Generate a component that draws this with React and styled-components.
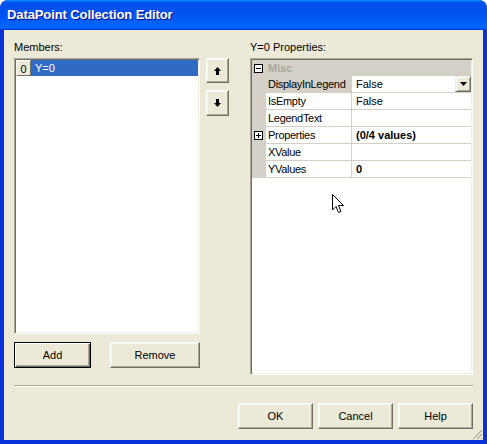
import React from 'react'
import styled, { createGlobalStyle } from 'styled-components'

const GlobalStyle = createGlobalStyle`
    body { margin: 0; background: #fff; }
    * { box-sizing: border-box; }
`;

const WINDOW = styled.div`
    position: relative;
    width: 487px;
    height: 444px;
    display: flex;
    flex-direction: column;
    background: #0831d9;
    border-radius: 8px 8px 0 0;
    font-family: "Liberation Sans", Arial, sans-serif;
    font-size: 11px;
    color: #000;
    overflow: hidden;
`;

const TITLE_BAR = styled.div`
    height: 30px;
    flex: none;
    display: flex;
    align-items: center;
    padding: 0 0 1px 7px;
    background: linear-gradient(180deg, #0997ff, #0053ee 8%, #0050ee 40%, #0066ff 88%, #0066ff 93%, #005bff 95%, #003dd7 96%, #003dd7);
    border-radius: 8px 8px 0 0;
    color: #fff;
    font-weight: bold;
    font-size: 13px;
    text-shadow: 1px 1px #0f1089;
    letter-spacing: -0.1px;
`;

const CLIENT = styled.div`
    position: relative;
    flex: 1;
    margin: 0 4px 4px;
    padding: 10px 10px 0;
    background: #ece9d8;
    display: flex;
    flex-direction: column;
`;

const TOP = styled.div`
    display: flex;
    align-items: flex-start;
`;

const COLUMN = styled.div`
    width: ${props => props.w}px;
    margin-left: ${props => props.ml || 0}px;
    display: flex;
    flex-direction: column;
`;

const LABEL = styled.div`
    height: 14px;
    line-height: 14px;
    margin-bottom: 4px;
`;

const SUNKEN = styled.div`
    height: ${props => props.h}px;
    background: #fff;
    border: 1px solid;
    border-color: #aca899 #fff #fff #aca899;
    box-shadow: inset 1px 1px #716f64, inset -1px -1px #f1efe2;
    padding: 1px;
`;

const LIST_ROW = styled.div`
    display: flex;
    height: 16px;
    line-height: 16px;
`;

const INDEX_CELL = styled.div`
    width: 15px;
    text-align: center;
    background: #ece9d8;
    border: 1px solid;
    border-color: #fff #716f64 #716f64 #fff;
`;

const SELECTED = styled.div`
    flex: 1;
    background: #316ac5;
    color: #fff;
    padding-left: 4px;
`;

const BUTTON_ROW = styled.div`
    display: flex;
    justify-content: ${props => props.end ? 'flex-end' : 'space-between'};
    gap: ${props => props.gap || 0}px;
    margin-top: ${props => props.mt || 0}px;
`;

const BUTTON = styled.button`
    width: ${props => props.w}px;
    height: ${props => props.h || 26}px;
    margin-top: ${props => props.mt || 0}px;
    padding: 0;
    display: flex;
    align-items: center;
    justify-content: center;
    background: #ece9d8;
    font-family: inherit;
    font-size: 11px;
    color: #000;
    border: 1px solid;
    border-color: ${props => props.def ? '#000' : '#fff #716f64 #716f64 #fff'};
    box-shadow: ${props => props.def
        ? 'inset 1px 1px #fff, inset -1px -1px #716f64, inset -2px -2px #aca899'
        : 'inset -1px -1px #aca899, inset 1px 1px #f5f4ee'};
`;

const GRID_ROW = styled.div`
    display: flex;
    height: ${props => props.category ? 16 : 17}px;
    background: ${props => props.category ? '#d4d0c8' : 'transparent'};
    border-bottom: ${props => props.category ? 'none' : '1px solid #d4d0c8'};
`;

const MARGIN = styled.div`
    width: 14px;
    flex: none;
    background: #d4d0c8;
    display: flex;
    align-items: center;
    justify-content: center;
    padding-right: 1px;
`;

const EXPANDER = styled.div`
    width: 9px;
    height: 9px;
    border: 1px solid #000;
    background: #fff;
    position: relative;

    &::before {
        content: '';
        position: absolute;
        left: 1px;
        top: 3px;
        width: 5px;
        height: 1px;
        background: #000;
    }

    &::after {
        content: '';
        display: ${props => props.plus ? 'block' : 'none'};
        position: absolute;
        left: 3px;
        top: 1px;
        width: 1px;
        height: 5px;
        background: #000;
    }
`;

const CATEGORY = styled.div`
    padding-left: 2px;
    line-height: 16px;
    font-weight: bold;
    color: #aca899;
`;

const NAME_CELL = styled.div`
    width: 86px;
    flex: none;
    padding-left: 2px;
    line-height: 16px;
    letter-spacing: -0.3px;
    border-right: 1px solid #d4d0c8;
    background: ${props => props.selected ? '#d4d0c8' : '#fff'};
    white-space: nowrap;
    overflow: hidden;
`;

const VALUE_CELL = styled.div`
    flex: 1;
    display: flex;
    align-items: center;
    justify-content: space-between;
    padding-left: 4px;
    line-height: 16px;
    font-weight: ${props => props.bold ? 'bold' : 'normal'};
`;

const DROP = styled.div`
    width: 16px;
    height: 16px;
    background: #ece9d8;
    border: 1px solid;
    border-color: #f1efe2 #716f64 #716f64 #f1efe2;
    box-shadow: inset 1px 1px #fff, inset -1px -1px #aca899;
    display: flex;
    align-items: center;
    justify-content: center;
`;

const SEPARATOR = styled.div`
    height: 2px;
    margin-top: 10px;
    border-top: 1px solid #aca899;
    border-bottom: 1px solid #fff;
`;

const GRIP = styled.svg`
    position: absolute;
    right: 0;
    bottom: 0;
`;

const CURSOR = styled.svg`
    position: absolute;
    left: 332px;
    top: 194px;
`;

const UpArrow = () => (
    <svg width="7" height="8" viewBox="0 0 7 8">
        <path d="M3.5 0 L7 4 H5 V8 H2 V4 H0 Z" fill="#000" />
    </svg>
)

const DownArrow = () => (
    <svg width="7" height="8" viewBox="0 0 7 8">
        <path d="M3.5 8 L7 4 H5 V0 H2 V4 H0 Z" fill="#000" />
    </svg>
)

const props = [
    { name: 'DisplayInLegend', value: 'False', selected: true, drop: true },
    { name: 'IsEmpty', value: 'False' },
    { name: 'LegendText', value: '' },
    { name: 'Properties', value: '(0/4 values)', bold: true, expand: true },
    { name: 'XValue', value: '' },
    { name: 'YValues', value: '0', bold: true },
]

export default function App() {
    return (
        <WINDOW>
            <GlobalStyle />
            <TITLE_BAR>DataPoint Collection Editor</TITLE_BAR>
            <CLIENT>
                <TOP>
                    <COLUMN w={186}>
                        <LABEL>Members:</LABEL>
                        <SUNKEN h={276}>
                            <LIST_ROW>
                                <INDEX_CELL>0</INDEX_CELL>
                                <SELECTED>Y=0</SELECTED>
                            </LIST_ROW>
                        </SUNKEN>
                        <BUTTON_ROW mt={8}>
                            <BUTTON def w={77}>Add</BUTTON>
                            <BUTTON w={90}>Remove</BUTTON>
                        </BUTTON_ROW>
                    </COLUMN>
                    <COLUMN w={23} ml={6}>
                        <BUTTON w={23} h={25} mt={18}><UpArrow /></BUTTON>
                        <BUTTON w={23} h={26} mt={7}><DownArrow /></BUTTON>
                    </COLUMN>
                    <COLUMN w={223} ml={21}>
                        <LABEL>Y=0 Properties:</LABEL>
                        <SUNKEN h={317}>
                            <GRID_ROW category>
                                <MARGIN><EXPANDER /></MARGIN>
                                <CATEGORY>Misc</CATEGORY>
                            </GRID_ROW>
                            {props.map(item =>
                                <GRID_ROW key={item.name}>
                                    <MARGIN>{item.expand && <EXPANDER plus />}</MARGIN>
                                    <NAME_CELL selected={item.selected}>{item.name}</NAME_CELL>
                                    <VALUE_CELL bold={item.bold}>
                                        <span>{item.value}</span>
                                        {item.drop &&
                                            <DROP>
                                                <svg width="7" height="4" viewBox="0 0 7 4"><path d="M0 0 H7 L3.5 4 Z" fill="#000" /></svg>
                                            </DROP>}
                                    </VALUE_CELL>
                                </GRID_ROW>
                            )}
                        </SUNKEN>
                    </COLUMN>
                </TOP>
                <SEPARATOR />
                <BUTTON_ROW end gap={5} mt={16}>
                    <BUTTON w={75}>OK</BUTTON>
                    <BUTTON w={75}>Cancel</BUTTON>
                    <BUTTON w={75}>Help</BUTTON>
                </BUTTON_ROW>
                <GRIP width="13" height="13" viewBox="0 0 13 13">
                    <path d="M12 2 L2 12 M12 6 L6 12 M12 10 L10 12" stroke="#fff" strokeWidth="1" />
                    <path d="M12 3 L3 12 M12 7 L7 12 M12 11 L11 12" stroke="#aca899" strokeWidth="1.2" />
                </GRIP>
            </CLIENT>
            <CURSOR width="12" height="20" viewBox="0 0 12 20">
                <path d="M0.5 0.5 V16 L4 12.5 L6.5 18.5 L9 17.5 L6.5 11.5 H11.5 Z" fill="#fff" stroke="#000" strokeWidth="1" />
            </CURSOR>
        </WINDOW>
    )
}
